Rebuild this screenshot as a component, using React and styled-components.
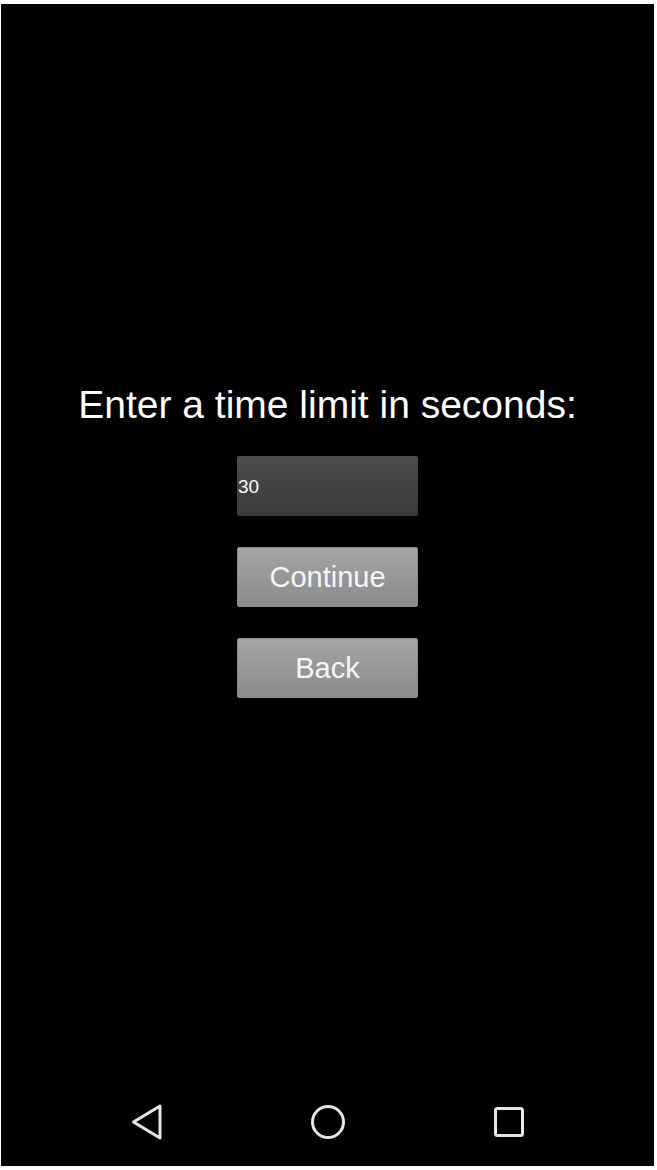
import React, { useState } from 'react'
import styled, { createGlobalStyle } from 'styled-components'

const GlobalStyle = createGlobalStyle`
  html, body {
    margin: 0;
    padding: 0;
    background: #fff;
  }
  body {
    font-family: "Liberation Sans", Arial, sans-serif;
  }
`

const Screen = styled.div`
  margin: 4px 3px 4px 1px;
  height: 1162px;
  background: #000;
  display: flex;
  flex-direction: column;
`

const Main = styled.div`
  flex: 1;
  display: flex;
  flex-direction: column;
  align-items: center;
  padding-top: 379px;
`

const Title = styled.div`
  color: #fff;
  font-size: 39px;
  line-height: 44px;
  margin-bottom: 29px;
  white-space: nowrap;
`

const Form = styled.div`
  display: flex;
  flex-direction: column;
  gap: 31px;
  width: 181px;
`

const NumberField = styled.input`
  box-sizing: border-box;
  width: 100%;
  height: 60px;
  margin: 0;
  padding: 2px 0 0 1px;
  border: none;
  border-radius: 2px;
  background: linear-gradient(#4c4c4c, #3a3a3a);
  color: #fff;
  font-family: "Liberation Sans", Arial, sans-serif;
  font-size: 19px;
  outline: none;
`

const Button = styled.button`
  box-sizing: border-box;
  width: 100%;
  height: 60px;
  margin: 0;
  padding: 0;
  border: 1px solid #8a8a8a;
  border-radius: 2px;
  background: linear-gradient(#a5a5a5, #8b8b8b);
  color: #f6f6f6;
  font-family: "Liberation Sans", Arial, sans-serif;
  font-size: 29px;
  cursor: pointer;
`

const NavBar = styled.div`
  height: 88px;
  display: flex;
  align-items: center;
  justify-content: center;
  gap: 141px;
`

const NavIcon = styled.svg`
  width: 40px;
  height: 40px;
  stroke: #e6e6e6;
  stroke-width: 3;
  fill: none;
  stroke-linejoin: round;
  stroke-linecap: round;
`

export default function App() {
  const [seconds, setSeconds] = useState('30')

  return (
    <>
      <GlobalStyle />
      <Screen>
        <Main>
          <Title>Enter a time limit in seconds:</Title>
          <Form>
            <NumberField
              value={seconds}
              onChange={e => setSeconds(e.target.value)}
            />
            <Button>Continue</Button>
            <Button>Back</Button>
          </Form>
        </Main>
        <NavBar>
          <NavIcon viewBox="0 0 40 40">
            <path d="M33 4 L33 36 L6.5 20 Z" />
          </NavIcon>
          <NavIcon viewBox="0 0 40 40">
            <circle cx="20" cy="20" r="15.5" />
          </NavIcon>
          <NavIcon viewBox="0 0 40 40">
            <rect x="6.5" y="6.5" width="27" height="27" rx="2" />
          </NavIcon>
        </NavBar>
      </Screen>
    </>
  )
}
